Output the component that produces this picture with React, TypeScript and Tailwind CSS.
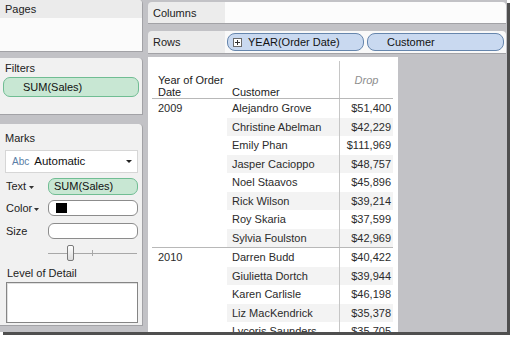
import React from 'react';

const rows2009: [string, string][] = [
  ['Alejandro Grove', '$51,400'],
  ['Christine Abelman', '$42,229'],
  ['Emily Phan', '$111,969'],
  ['Jasper Cacioppo', '$48,757'],
  ['Noel Staavos', '$45,896'],
  ['Rick Wilson', '$39,214'],
  ['Roy Skaria', '$37,599'],
  ['Sylvia Foulston', '$42,969'],
];

const rows2010: [string, string][] = [
  ['Darren Budd', '$40,422'],
  ['Giulietta Dortch', '$39,944'],
  ['Karen Carlisle', '$46,198'],
  ['Liz MacKendrick', '$35,378'],
  ['Lycoris Saunders', '$35,705'],
];

const Caret: React.FC<{ className?: string }> = ({ className = '' }) => (
  <svg width="5" height="3" viewBox="0 0 5 3" className={className}>
    <path d="M0 0h5L2.5 3z" fill="#333" />
  </svg>
);

const YearGroup: React.FC<{ year: string; rows: [string, string][]; divider?: boolean }> = ({
  year,
  rows,
  divider,
}) => (
  <div className={`flex ${divider ? 'border-b border-[#b8b8b8]' : ''}`}>
    <div className="w-[75px] h-[18.5px] pl-[6px] leading-[18.5px]">{year}</div>
    <div className="flex flex-col">
      {rows.map(([name, value], i) => (
        <div
          key={name}
          className={`flex h-[18.5px] leading-[18.5px] ${i % 2 === 1 ? 'bg-[#f3f3f3]' : ''}`}
        >
          <div className="w-[112px] pl-[5px] whitespace-nowrap">{name}</div>
          <div className="w-[54px] border-l border-[#c6c6c6] pr-[2px] text-right">{value}</div>
        </div>
      ))}
    </div>
  </div>
);

export default function App() {
  return (
    <div className="w-[512px] h-[338px] overflow-hidden bg-white font-['Liberation_Sans',Arial,sans-serif] text-[11px] text-[#222]">
      <div className="flex w-[507px] h-[332px] bg-[#c2c2c6] shadow-[3px_3px_0_#4f4f4f]">
        {/* left: pages / filters / marks */}
        <div className="flex w-[143px] flex-col">
          <div className="h-[52px] overflow-hidden rounded-tr-[4px] border-r border-b border-[#a2a2a6] bg-[#fbfbfb]">
            <div className="h-[18px] bg-[#ebebeb] pl-[5px] leading-[19px]">Pages</div>
          </div>

          <div className="mt-[6px] h-[57px] rounded-tr-[4px] border-r border-b border-[#a2a2a6] bg-[#f1f1f1]">
            <div className="h-[19px] pl-[5px] leading-[21px]">Filters</div>
            <div className="mx-[3px] h-[20px] rounded-[7px] border border-[#70bd93] bg-[#c8e7d3] pl-[19px] leading-[18px] text-[#111]">
              SUM(Sales)
            </div>
          </div>

          <div className="mt-[9px] h-[202px] rounded-tr-[4px] border-r border-b border-[#a2a2a6] bg-[#f1f1f1] pt-[2px]">
            <div className="h-[22px] pl-[5px] leading-[24px]">Marks</div>

            <div className="mt-[2px] ml-[5px] flex h-[23px] w-[133px] items-center border border-[#d6d6d6] bg-white pl-[6px]">
              <span className="text-[10px] text-[#5a7ea6]">Abc</span>
              <span className="ml-[5px] text-[11.5px] text-[#111]">Automatic</span>
              <svg width="6" height="3" viewBox="0 0 6 3" className="ml-auto mr-[5px]">
                <path d="M0 0h6L3 3z" fill="#222" />
              </svg>
            </div>

            <div className="mt-[5px] flex h-[17px] items-center">
              <div className="flex w-[48px] items-center pl-[6px]">
                Text
                <Caret className="ml-[3px] mt-[2px]" />
              </div>
              <div className="h-[17px] w-[90px] rounded-[7px] border border-[#70bd93] bg-[#c8e7d3] pl-[5px] leading-[15px] text-[#111]">
                SUM(Sales)
              </div>
            </div>

            <div className="mt-[5px] flex h-[16px] items-center">
              <div className="flex w-[48px] items-center pl-[6px]">
                Color
                <Caret className="ml-[2px] mt-[2px]" />
              </div>
              <div className="flex h-[16px] w-[90px] items-center rounded-[6px] border border-[#8c8c8c] bg-white pl-[7px]">
                <div className="h-[10px] w-[11px] bg-black" />
              </div>
            </div>

            <div className="mt-[7px] flex h-[16px] items-center">
              <div className="w-[48px] pl-[6px]">Size</div>
              <div className="h-[16px] w-[90px] rounded-[6px] border border-[#8c8c8c] bg-white" />
            </div>

            <div className="relative mt-[6px] ml-[48px] h-[16px] w-[89px]">
              <div className="absolute left-0 right-0 top-[8px] h-px bg-[#a8a8a8]" />
              <div className="absolute left-[44px] top-[5px] h-[6px] w-px bg-[#a8a8a8]" />
              <div className="absolute left-[19px] top-0 h-[16px] w-[7px] rounded-[2px] border border-[#7a7a7a] bg-gradient-to-b from-white to-[#dcdcdc]" />
            </div>

            <div className="mt-[2px] h-[19px] pl-[7px] leading-[20px]">Level of Detail</div>
            <div className="ml-[6px] h-[41px] w-[132px] border border-[#858585] bg-white shadow-[inset_1px_1px_0_#e0e0e0]" />
          </div>
        </div>

        {/* right: shelves and view */}
        <div className="ml-[5px] flex w-[358px] flex-col">
          <div className="mt-[2px] flex h-[22px] overflow-hidden rounded-t-[4px] border-b border-[#a2a2a6]">
            <div className="w-[77px] bg-[#ececec] pl-[5px] leading-[22px]">Columns</div>
            <div className="flex-1 bg-[#fcfcfc]" />
          </div>

          <div className="mt-[7px] flex h-[23px] overflow-hidden rounded-t-[4px] border-b border-[#a2a2a6]">
            <div className="w-[77px] bg-[#ececec] pl-[5px] leading-[23px]">Rows</div>
            <div className="flex flex-1 items-center gap-[3px] bg-[#f9f9f9] pl-[2px] text-[#111]">
              <div className="flex h-[18px] w-[137px] items-center rounded-[8px] border border-[#6686ad] bg-[#c9d9f0] pl-[5px]">
                <div className="flex h-[9px] w-[9px] items-center justify-center border border-[#6b6b6b] bg-white">
                  <svg width="5" height="5" viewBox="0 0 5 5">
                    <path d="M0 2.5h5M2.5 0v5" stroke="#333" strokeWidth="1" />
                  </svg>
                </div>
                <span className="ml-[6px] whitespace-nowrap">YEAR(Order Date)</span>
              </div>
              <div className="flex h-[18px] w-[137px] items-center rounded-[8px] border border-[#6686ad] bg-[#c9d9f0] pl-[19px]">
                Customer
              </div>
            </div>
          </div>

          <div className="mt-[3px] flex flex-1 overflow-hidden">
            <div className="w-[250px] overflow-hidden bg-white pl-[4px] pr-[5px] text-[#2b2b2b]">
              <div className="flex h-[42px] items-end border-b border-[#b8b8b8] text-[#222]">
                <div className="w-[75px] pl-[6px] leading-[12px]">
                  Year of Order
                  <br />
                  Date
                </div>
                <div className="w-[112px] pl-[5px] leading-[12px]">Customer</div>
                <div className="mt-[4px] flex w-[54px] items-end justify-center self-stretch border-l border-[#c6c6c6] pb-[12px] leading-[12px] italic text-[#8e8e8e]">
                  Drop
                </div>
              </div>
              <YearGroup year="2009" rows={rows2009} divider />
              <YearGroup year="2010" rows={rows2010} />
            </div>
            <div className="flex-1" />
          </div>
        </div>
      </div>
    </div>
  );
}
